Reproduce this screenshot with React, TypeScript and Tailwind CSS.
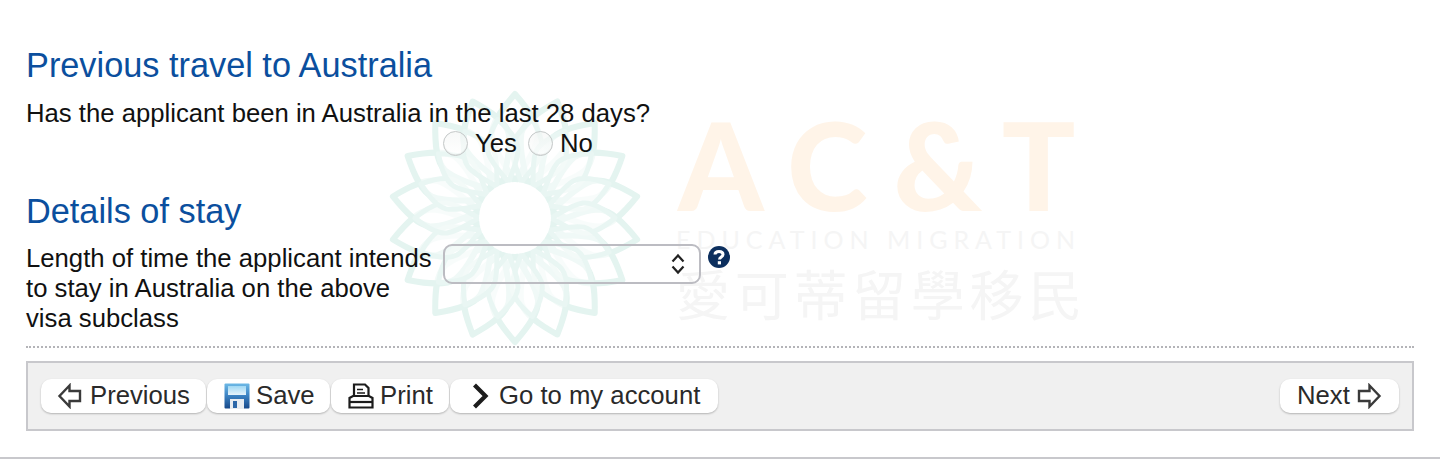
import React from "react";

const outer = Array.from({ length: 18 }, (_, i) => i * 20);

function Flower() {
  return (
    <svg width="260" height="260" viewBox="-130 -130 260 260" fill="none" className="absolute left-[385px] top-[88px]">
      {outer.map((a) => (
        <path
          key={a}
          transform={`rotate(${a})`}
          d="M0 -124 C14 -108 24 -94 23 -82 C20 -66 8 -50 0 -36 C-8 -50 -20 -66 -23 -82 C-24 -94 -14 -108 0 -124 Z"
          fill="#ffffff"
          fillOpacity="0.55"
          stroke="#e4f4f0"
          strokeWidth="6"
          strokeLinejoin="round"
        />
      ))}
      {outer.map((a) => (
        <path
          key={a}
          transform={`rotate(${a + 10})`}
          d="M0 -100 C10 -88 16 -78 15 -68 C13 -56 5 -46 0 -36 C-5 -46 -13 -56 -15 -68 C-16 -78 -10 -88 0 -100 Z"
          fill="#ffffff"
          fillOpacity="0.45"
          stroke="#e9f6f3"
          strokeWidth="5"
          strokeLinejoin="round"
        />
      ))}
      <circle r="36" fill="#ffffff" />
    </svg>
  );
}

function Watermark() {
  return (
    <div className="absolute inset-0 overflow-hidden">
      <Flower />
      <div className="absolute left-[678px] top-[112px] text-[122px] leading-[104px] font-black tracking-[26px] whitespace-nowrap text-[#fff4e8] font-['Lato',sans-serif]">
        AC&amp;T
      </div>
      <div className="absolute left-[676px] top-[224px] text-[25px] leading-[30px] tracking-[6px] whitespace-nowrap text-[#f5f5f5] font-['Lato',sans-serif]">
        EDUCATION MIGRATION
      </div>
      <div className="absolute left-[676px] top-[260px] text-[54px] leading-[66px] tracking-[4.7px] whitespace-nowrap text-[#f5f5f5] font-['Noto_Sans_CJK_TC',sans-serif]">
        愛可蒂留學移民
      </div>
    </div>
  );
}

function ArrowLeft() {
  return (
    <svg width="26" height="26" viewBox="0 0 26 26" fill="none" stroke="#3a3a3a" strokeWidth="2.4">
      <path d="M12.5 2.5 L2.5 13 L12.5 23.5 V18 H23 V8 H12.5 Z" strokeLinejoin="miter" />
    </svg>
  );
}

function ArrowRight() {
  return (
    <svg width="26" height="26" viewBox="0 0 26 26" fill="none" stroke="#3a3a3a" strokeWidth="2.4">
      <path d="M13.5 2.5 L23.5 13 L13.5 23.5 V18 H3 V8 H13.5 Z" strokeLinejoin="miter" />
    </svg>
  );
}

function SaveIcon() {
  return (
    <svg width="26" height="26" viewBox="0 0 26 26">
      <defs>
        <linearGradient id="disk" x1="0" y1="0" x2="0" y2="1">
          <stop offset="0" stopColor="#6db9e6" />
          <stop offset="0.45" stopColor="#3f86c6" />
          <stop offset="1" stopColor="#17498a" />
        </linearGradient>
        <linearGradient id="label" x1="0" y1="0" x2="0" y2="1">
          <stop offset="0" stopColor="#9fd8f4" />
          <stop offset="1" stopColor="#e8f4fb" />
        </linearGradient>
      </defs>
      <rect x="0.5" y="0.5" width="25" height="25" rx="1" fill="url(#disk)" />
      <rect x="4" y="3" width="18" height="9" fill="url(#label)" />
      <rect x="6" y="16" width="14" height="10" fill="#e8ecf1" />
      <rect x="9" y="18" width="4" height="7" fill="#2b66a8" />
    </svg>
  );
}

function PrintIcon() {
  return (
    <svg width="26" height="26" viewBox="0 0 26 26" fill="none" stroke="#1c1c1c" strokeWidth="2.2">
      <path d="M6 13 V1.5 H17 L20.5 5 V13" />
      <path d="M9 6.5 H15 M9 10 H17" strokeWidth="1.6" />
      <path d="M1.5 24.5 V15 L5 13 H21 L24.5 15 V24.5 Z" />
      <path d="M1.5 19 H24.5" />
    </svg>
  );
}

function Chevron() {
  return (
    <svg width="20" height="26" viewBox="0 0 20 26" fill="none" stroke="#1c1c1c" strokeWidth="4.2">
      <path d="M3.5 2 L14.5 13 L3.5 24" />
    </svg>
  );
}

function Btn({ children, className }: { children: React.ReactNode; className: string }) {
  return (
    <button className={`h-[34px] flex items-center rounded-[10px] bg-white shadow-[0_1px_2px_rgba(0,0,0,0.25)] text-[#2a2a2a] leading-[28px] whitespace-nowrap ${className}`}>
      {children}
    </button>
  );
}

function BtnText({ children }: { children: React.ReactNode }) {
  return <span className="pb-[2px]">{children}</span>;
}

function Radio({ label }: { label: string }) {
  return (
    <span className="flex items-center">
      <span className="w-[25px] h-[25px] rounded-full border border-[#c4c8c8] bg-gradient-to-b from-[#f2f4f3]/60 to-white/60 shadow-[inset_0_-1px_1px_rgba(0,0,0,0.08)]" />
      <span className="ml-[7px]">{label}</span>
    </span>
  );
}

export default function App() {
  return (
    <div className="relative h-[459px] bg-white border-b-[2px] border-[#c8c8cc] overflow-hidden text-[25.7px] leading-[30px] text-[#111] font-['Liberation_Sans',Arial,sans-serif]">
      <Watermark />
      <div className="relative px-[26px] pt-[46px]">
        <h2 className="text-[34.3px] leading-[38px] text-[#0b4f9e]">Previous travel to Australia</h2>
        <p className="mt-[14px]">Has the applicant been in Australia in the last 28 days?</p>
        <div className="flex gap-[11px] pl-[417px]">
          <Radio label="Yes" />
          <Radio label="No" />
        </div>
        <h2 className="mt-[34px] text-[34.3px] leading-[38px] text-[#0b4f9e]">Details of stay</h2>
        <div className="mt-[13px] flex items-start">
          <p className="w-[417px] shrink-0">
            Length of time the applicant intends
            <br />
            to stay in Australia on the above
            <br />
            visa subclass
          </p>
          <div className="mt-[1px] w-[258px] h-[40px] flex items-center justify-end pr-[13px] rounded-[9px] border-[2px] border-[#bcbcc2]">
            <svg width="16" height="24" viewBox="0 0 16 24" fill="none" stroke="#222" strokeWidth="2.2">
              <path d="M2.5 9.5 L8 3.5 L13.5 9.5 M2.5 14.5 L8 20.5 L13.5 14.5" />
            </svg>
          </div>
          <svg width="24" height="24" viewBox="0 0 24 24" className="ml-[6px] mt-[2px]">
            <circle cx="12" cy="12" r="11" fill="#0c2f5e" />
            <path d="M8 9.5 C8 5.5 16 5.5 16 9.5 C16 12 12.5 12 12.5 14.5" fill="none" stroke="#fff" strokeWidth="3" />
            <rect x="10.8" y="16.2" width="3.2" height="3.2" fill="#fff" />
          </svg>
        </div>
        <div className="mt-[13px] border-t-[2px] border-dotted border-[#b4b4b8]" />
        <div className="mt-[13px] h-[70px] flex items-center justify-between px-[13px] border-[2px] border-[#c8c8cc] bg-[#f0f0f0]">
          <div className="flex gap-[1px]">
            <Btn className="w-[165px] pl-[16px] gap-[7px]">
              <ArrowLeft />
              <BtnText>Previous</BtnText>
            </Btn>
            <Btn className="w-[123px] pl-[17px] gap-[6px]">
              <SaveIcon />
              <BtnText>Save</BtnText>
            </Btn>
            <Btn className="w-[118px] pl-[17px] gap-[6px]">
              <PrintIcon />
              <BtnText>Print</BtnText>
            </Btn>
            <Btn className="w-[268px] pl-[21px] gap-[8px]">
              <Chevron />
              <BtnText>Go to my account</BtnText>
            </Btn>
          </div>
          <Btn className="w-[119px] pl-[17px] gap-[6px]">
            <BtnText>Next</BtnText>
            <ArrowRight />
          </Btn>
        </div>
      </div>
    </div>
  );
}
